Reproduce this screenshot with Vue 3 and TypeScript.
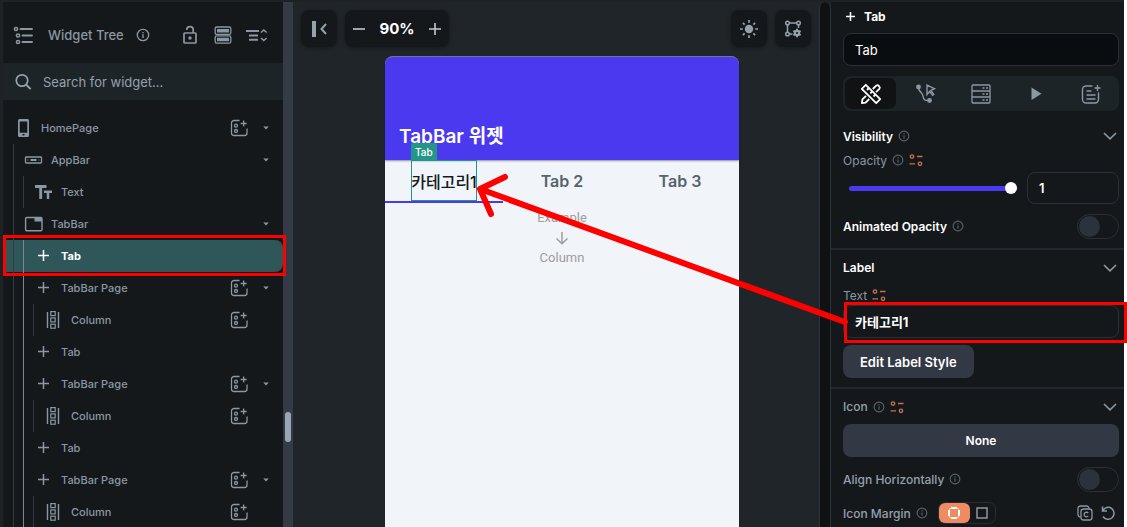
<script setup lang="ts">
import { ref } from 'vue'

interface TreeNode {
  label: string
  icon: string
  depth: number
  add?: boolean
  open?: boolean
  selected?: boolean
  guides: string[]
}

const nodes = ref<TreeNode[]>([
  { label: 'HomePage', icon: 'phone', depth: 0, add: true, open: true, guides: [] },
  { label: 'AppBar', icon: 'appbar', depth: 1, open: true, guides: ['dim'] },
  { label: 'Text', icon: 'text', depth: 2, guides: ['dim', 'dim'] },
  { label: 'TabBar', icon: 'tabbar', depth: 1, open: true, guides: ['dim'] },
  { label: 'Tab', icon: 'plus', depth: 2, selected: true, guides: ['dim', 'lit'] },
  { label: 'TabBar Page', icon: 'plus', depth: 2, add: true, open: true, guides: ['dim', 'lit'] },
  { label: 'Column', icon: 'column', depth: 3, add: true, guides: ['dim', 'lit', 'dim'] },
  { label: 'Tab', icon: 'plus', depth: 2, guides: ['dim', 'lit'] },
  { label: 'TabBar Page', icon: 'plus', depth: 2, add: true, open: true, guides: ['dim', 'lit'] },
  { label: 'Column', icon: 'column', depth: 3, add: true, guides: ['dim', 'lit', 'dim'] },
  { label: 'Tab', icon: 'plus', depth: 2, guides: ['dim', 'lit'] },
  { label: 'TabBar Page', icon: 'plus', depth: 2, add: true, open: true, guides: ['dim', 'lit'] },
  { label: 'Column', icon: 'column', depth: 3, add: true, guides: ['dim', 'lit', 'dim'] },
])

const modes = [
  { id: 'design', label: 'Properties' },
  { id: 'action', label: 'Actions' },
  { id: 'data', label: 'Backend query' },
  { id: 'play', label: 'Animations' },
  { id: 'note', label: 'Documentation' },
]
const mode = ref('design')
const widgetName = ref('Tab')
const labelText = ref('카테고리1')
const opacity = ref('1')
const animated = ref(false)
const alignH = ref(false)
</script>

<template>
  <svg class="sprite" aria-hidden="true">
    <symbol id="info" viewBox="0 0 14 14">
      <circle cx="7" cy="7" r="5.7" fill="none" stroke="currentColor" stroke-width="1.3" />
      <path d="M7 6.3V10M7 3.9v1.3" stroke="currentColor" stroke-width="1.4" />
    </symbol>
    <symbol id="list" viewBox="0 0 20 20">
      <g fill="none" stroke="currentColor" stroke-width="1.5">
        <circle cx="3" cy="4" r="1.6" /><circle cx="5" cy="10.5" r="1.6" /><circle cx="5" cy="17" r="1.6" />
        <path d="M7.5 4H19M9.5 10.5H19M9.5 17H19" stroke-width="1.9" stroke-linecap="round" />
      </g>
    </symbol>
    <symbol id="lock" viewBox="0 0 18 20">
      <g fill="none" stroke="currentColor" stroke-width="1.7">
        <rect x="3" y="8" width="12" height="10" rx="0.8" />
        <path d="M5.8 5V4.800a3.200 3.200 0 0 1 6.400 0V8" />
      </g>
      <circle cx="9" cy="13" r="1.7" fill="currentColor" />
    </symbol>
    <symbol id="rows" viewBox="0 0 18 20">
      <g fill="none" stroke="currentColor" stroke-width="1.3">
        <rect x="1.2" y="2" width="15.6" height="7.4" rx="1.5" />
        <rect x="1.2" y="10.8" width="15.6" height="7.4" rx="1.5" />
      </g>
      <path d="M3 4h12v3.5H3zM3 12.800h12v3.5H3z" fill="currentColor" />
    </symbol>
    <symbol id="sort" viewBox="0 0 22 16">
      <g fill="none" stroke="currentColor" stroke-width="1.9">
        <path d="M0 4h13M3 8.500h9M3 12.700h9" />
        <path d="M15 5.500 17.800 3l2.800 2.500M15 11l2.800 2.500L20.600 11" stroke-width="1.6" />
      </g>
    </symbol>
    <symbol id="search" viewBox="0 0 18 18">
      <circle cx="7" cy="7.5" r="5.7" fill="none" stroke="currentColor" stroke-width="1.7" />
      <path d="m11 11.500 4.700 4.700" stroke="currentColor" stroke-width="1.9" />
    </symbol>
    <symbol id="phone" viewBox="0 0 20 20">
      <path fill="currentColor" fill-rule="evenodd" d="M6.500 1h8q1.500 0 1.500 1.500v15q0 1.500-1.500 1.500h-8Q5 19 5 17.500v-15Q5 1 6.500 1zM6.700 3.500v11.300h7.600V3.500zM9.500 16h2v1.600h-2z" />
    </symbol>
    <symbol id="appbar" viewBox="0 0 20 20">
      <rect x="2.5" y="7" width="16" height="6" rx="0.8" fill="none" stroke="currentColor" stroke-width="1.3" />
      <path d="M7.500 10h6" stroke="currentColor" stroke-width="2" />
      <path d="M4.500 10h1M15.500 10h1" stroke="currentColor" />
    </symbol>
    <symbol id="text" viewBox="0 0 20 20">
      <path d="M2 4.500h11.500M7.700 4v13" fill="none" stroke="currentColor" stroke-width="2.9" />
      <path d="M11 9.700h8M15 9v8" fill="none" stroke="currentColor" stroke-width="2.5" />
    </symbol>
    <symbol id="tabbar" viewBox="0 0 20 20">
      <rect x="2.6" y="3.5" width="16.4" height="13.2" rx="1.2" fill="none" stroke="currentColor" stroke-width="1.4" />
      <path d="M11.500 3.500H19V7.500h-7.500z" fill="currentColor" />
    </symbol>
    <symbol id="plus" viewBox="0 0 20 20">
      <path d="M10.500 4v11M5 9.500h11" stroke="currentColor" stroke-width="1.5" />
    </symbol>
    <symbol id="column" viewBox="0 0 20 20">
      <g fill="none" stroke="currentColor" stroke-width="1.2">
        <path d="M4.500 2v16M15.500 2v16" stroke-width="1.4" />
        <rect x="7.8" y="1.6" width="4.4" height="4" /><rect x="7.8" y="7.9" width="4.4" height="4" /><rect x="7.8" y="14.2" width="4.4" height="4" />
      </g>
    </symbol>
    <symbol id="add" viewBox="0 0 18 18">
      <g fill="none" stroke="currentColor" stroke-width="1.3">
        <path d="M9.500 1.500H4A2.500 2.500 0 0 0 1.500 4v10A2.500 2.500 0 0 0 4 16.500h10.500A2.500 2.500 0 0 0 17 14V9.500" />
        <circle cx="6" cy="6.7" r="1.5" /><circle cx="6" cy="12" r="1.5" />
        <path d="M13.700 1.500v6M10.700 4.500h6" />
      </g>
    </symbol>
    <symbol id="caret" viewBox="0 0 14 14">
      <path d="M4.200 5.500h5.600L7 8.500z" fill="currentColor" />
    </symbol>
    <symbol id="collapse" viewBox="0 0 18 18">
      <path d="M4 1v16" stroke="currentColor" stroke-width="4" />
      <path d="M16 4 11.500 9l4.500 5" fill="none" stroke="currentColor" stroke-width="2" />
    </symbol>
    <symbol id="minus" viewBox="0 0 14 14"><path d="M1 7h12" stroke="currentColor" stroke-width="1.6" /></symbol>
    <symbol id="more" viewBox="0 0 14 14"><path d="M1 7h12M7 1v12" stroke="currentColor" stroke-width="1.6" /></symbol>
    <symbol id="bold-plus" viewBox="0 0 10 10"><path d="M0 5h10M5 0v10" stroke="currentColor" stroke-width="1.7" /></symbol>
    <symbol id="sun" viewBox="0 0 20 20">
      <circle cx="10" cy="10" r="4.2" fill="currentColor" />
      <path d="M10 1v2.800M10 16.200V19M1 10h2.800M16.200 10H19M3.900 3.900l1.700 1.700M14.400 14.400l1.700 1.700M3.900 16.100l1.700-1.700M14.400 5.600l1.700-1.700" stroke="currentColor" stroke-width="1.7" />
    </symbol>
    <symbol id="frame" viewBox="0 0 20 20">
      <g fill="none" stroke="currentColor" stroke-width="1.5">
        <circle cx="4.5" cy="4" r="1.8" /><circle cx="15.5" cy="4" r="1.800" /><circle cx="4.5" cy="15" r="1.8" />
        <path d="M6.500 4h7M4.500 6v7M15.500 6v3M6.500 15h3" />
      </g>
      <circle cx="14" cy="14" r="3.2" fill="currentColor" />
      <path d="M14 9.800v8.400M10.400 11.900l7.200 4.200M10.400 16.100l7.200-4.200" stroke="currentColor" stroke-width="2" />
      <circle cx="14" cy="14" r="1.100" fill="#14181b" />
    </symbol>
    <symbol id="design" viewBox="0 0 22 22">
      <g fill="none" stroke="currentColor" stroke-width="1.8" stroke-linejoin="round">
        <path d="m5.800 1.800 14.400 14.400-4 4L1.800 5.800z" />
        <path d="m7 7 1.800-1.800M10.300 10.300l1.800-1.800M13.500 13.500l1.800-1.800" />
        <path d="m12.800 6 3.400-3.400q1.300-1 2.500.2l.5.500q1.200 1.200.2 2.500L16 9.200M6 12.800 2.400 16.400l-.5 3.700 3.700-.5 3.600-3.600" stroke-width="1.8" />
      </g>
    </symbol>
    <symbol id="action" viewBox="0 0 22 22">
      <circle cx="3.5" cy="4" r="2.4" fill="currentColor" /><circle cx="14.5" cy="17.5" r="2.4" fill="currentColor" />
      <path d="M3.500 5C4.500 10 7.500 9 8 13s2 4.500 5 4.500M12 2l7.500 3.800-3.600 1.600 2.900 4-1.200.9-2.900-4L12 11.500z" fill="none" stroke="currentColor" stroke-width="1.4" />
    </symbol>
    <symbol id="data" viewBox="0 0 22 22">
      <g fill="none" stroke="currentColor" stroke-width="1.3">
        <rect x="2" y="2" width="18" height="18" rx="1" />
        <path d="M2 8h18M2 14h18" />
        <path d="M12.500 5h2M16 5h2M12.500 11h2M16 11h2M12.500 17h2M16 17h2" stroke-width="1.6" />
      </g>
    </symbol>
    <symbol id="play" viewBox="0 0 22 22"><path d="M6.500 4.500v12.500L16.500 10.700z" fill="currentColor" /></symbol>
    <symbol id="note" viewBox="0 0 22 22">
      <g fill="none" stroke="currentColor" stroke-width="1.4" stroke-linecap="round">
        <path d="M12 3H6a3.500 3.500 0 0 0-3.500 3.500v10A3.500 3.500 0 0 0 6 20h9a3.500 3.500 0 0 0 3.500-3.500V10M17.500 2.500v5M15 5h5" />
        <path d="M7 8h4M7 12h8M7 16h8" />
      </g>
    </symbol>
    <symbol id="down" viewBox="0 0 14 14"><path d="m1 4 6 5.800L13 4" fill="none" stroke="currentColor" stroke-width="1.6" /></symbol>
    <symbol id="vars" viewBox="0 0 14 14">
      <g fill="none" stroke="currentColor" stroke-width="1.3">
        <circle cx="3" cy="3.5" r="1.7" /><circle cx="11" cy="10.8" r="1.7" />
        <path d="M8 3.500h5.500M.5 10.800h5.500" />
      </g>
    </symbol>
    <symbol id="corners" viewBox="0 0 14 14">
      <path d="M4 2h6M4 12h6M2 4v6M12 4v6" stroke="#fff" stroke-width="2" />
      <path d="M2.500 4V2.500H4M10 2.500h1.500V4M2.500 10v1.500H4M10 11.500h1.500V10" fill="none" stroke="#f7c9b0" />
    </symbol>
    <symbol id="square" viewBox="0 0 14 14"><rect x="2" y="2" width="10" height="10" fill="none" stroke="currentColor" stroke-width="1.5" /></symbol>
    <symbol id="copy" viewBox="0 0 16 16">
      <g fill="none" stroke="currentColor" stroke-width="1.3">
        <rect x="4" y="4" width="11" height="11" rx="2.5" />
        <path d="M3.500 12A2.500 2.500 0 0 1 1 9.500v-6A2.500 2.500 0 0 1 3.500 1h6A2.500 2.500 0 0 1 12 3.500M11.300 8.200a2.300 2.300 0 1 0 0 2.700" />
      </g>
    </symbol>
    <symbol id="undo" viewBox="0 0 16 16">
      <path d="M2.500 1.500v4.500H7M2.800 5.500a6 6 0 1 1 .2 6" fill="none" stroke="currentColor" stroke-width="1.5" />
    </symbol>
  </svg>

  <div class="app">
    <aside class="tree">
      <header class="tree-head">
        <svg class="i20"><use href="#list" /></svg>
        <h1>Widget Tree</h1>
        <svg class="i14"><use href="#info" /></svg>
        <div class="tree-tools">
          <button aria-label="Unlock"><svg class="i20"><use href="#lock" /></svg></button>
          <button aria-label="Layout"><svg class="i20"><use href="#rows" /></svg></button>
          <button aria-label="Collapse all"><svg class="i22"><use href="#sort" /></svg></button>
        </div>
      </header>
      <label class="search">
        <svg class="i18"><use href="#search" /></svg>
        <input type="text" placeholder="Search for widget..." aria-label="Search for widget" />
      </label>
      <ul class="nodes">
        <li v-for="(n, i) in nodes" :key="i" class="node" :class="{ selected: n.selected }">
          <span v-for="(g, k) in n.guides" :key="k" class="guide" :class="g"></span>
          <svg class="i20"><use :href="'#' + n.icon" /></svg>
          <span class="name">{{ n.label }}</span>
          <button v-if="n.add" aria-label="Add child"><svg class="i18"><use href="#add" /></svg></button>
          <span class="caret">
            <button v-if="n.open" aria-label="Toggle children"><svg class="i14"><use href="#caret" /></svg></button>
          </span>
        </li>
      </ul>
    </aside>

    <div class="track"><span class="thumb"></span></div>

    <main class="canvas">
      <div class="toolbar">
        <button class="tool" aria-label="Collapse panel"><svg class="i18"><use href="#collapse" /></svg></button>
        <div class="tool zoom">
          <button aria-label="Zoom out"><svg class="i14"><use href="#minus" /></svg></button>
          <strong>90%</strong>
          <button aria-label="Zoom in"><svg class="i14"><use href="#more" /></svg></button>
        </div>
        <span class="spacer"></span>
        <button class="tool" aria-label="Light mode"><svg class="i20"><use href="#sun" /></svg></button>
        <button class="tool" aria-label="Canvas settings"><svg class="i20"><use href="#frame" /></svg></button>
      </div>
      <section class="device">
        <div class="appbar">TabBar 위젯</div>
        <div class="tabs">
          <div class="tab current">
            <span class="picked"><span class="tag">Tab</span>카테고리1</span>
          </div>
          <div class="tab">Tab 2</div>
          <div class="tab">Tab 3</div>
        </div>
        <div class="example">
          <span>Example</span>
          <svg class="i14" viewBox="0 0 14 14"><path d="M7 1v11.500M1.500 7.500 7 12.700l5.500-5.200" fill="none" stroke="currentColor" stroke-width="1.5" /></svg>
          <span>Column</span>
        </div>
      </section>
      <span class="rail"></span>
    </main>

    <aside class="props">
      <div class="title"><svg class="tiny"><use href="#bold-plus" /></svg><h2>Tab</h2></div>
      <input v-model="widgetName" class="field dark" type="text" aria-label="Widget name" />
      <nav class="modes">
        <button v-for="m in modes" :key="m.id" :class="{ on: mode === m.id }" :aria-label="m.label" @click="mode = m.id">
          <svg class="i22"><use :href="'#' + m.id" /></svg>
        </button>
      </nav>

      <section class="group first">
        <div class="row"><h3>Visibility</h3><svg class="faint"><use href="#info" /></svg><button class="end" aria-label="Collapse Visibility"><svg class="i14"><use href="#down" /></svg></button></div>
        <div class="row"><label for="opacity">Opacity</label><svg class="faint"><use href="#info" /></svg><svg class="i14 orange"><use href="#vars" /></svg></div>
        <div class="slide">
          <input id="opacity" v-model="opacity" type="range" min="0" max="1" step="0.01" />
          <input v-model="opacity" class="field num" type="text" aria-label="Opacity value" />
        </div>
        <div class="row toggle-row"><label class="strong" for="anim">Animated Opacity</label><svg class="faint"><use href="#info" /></svg><input id="anim" v-model="animated" class="switch end" type="checkbox" /></div>
      </section>

      <section class="group">
        <div class="row tall"><h3>Label</h3><button class="end" aria-label="Collapse Label"><svg class="i14"><use href="#down" /></svg></button></div>
        <div class="row short"><label for="label-text">Text</label><svg class="i14 orange"><use href="#vars" /></svg></div>
        <input id="label-text" v-model="labelText" class="field ko" type="text" />
        <button class="solid edit">Edit Label Style</button>
      </section>

      <section class="group">
        <div class="row tall"><h3 class="soft">Icon</h3><svg class="faint"><use href="#info" /></svg><svg class="i14 orange"><use href="#vars" /></svg><button class="end" aria-label="Collapse Icon"><svg class="i14"><use href="#down" /></svg></button></div>
        <button class="solid none">None</button>
        <div class="row toggle-row"><label class="soft" for="align">Align Horizontally</label><svg class="faint"><use href="#info" /></svg><input id="align" v-model="alignH" class="switch end" type="checkbox" /></div>
        <div class="row">
          <span class="soft">Icon Margin</span><svg class="faint"><use href="#info" /></svg>
          <div class="segment">
            <button class="on" aria-label="Each side"><svg class="i14"><use href="#corners" /></svg></button>
            <button aria-label="All sides"><svg class="i14"><use href="#square" /></svg></button>
          </div>
          <div class="pair end">
            <button aria-label="Copy"><svg class="i16"><use href="#copy" /></svg></button>
            <button aria-label="Reset"><svg class="i16"><use href="#undo" /></svg></button>
          </div>
        </div>
      </section>
    </aside>
  </div>

  <svg class="marks" aria-hidden="true">
    <g fill="none" stroke="#f00">
      <rect x="4.5" y="236.5" width="280" height="38" stroke-width="3" />
      <rect x="845.5" y="303.5" width="280" height="38" stroke-width="3" />
      <path d="M845 322 480 189M505 177l-25 12 11 25" stroke-width="6" stroke-linecap="round" stroke-linejoin="round" />
    </g>
  </svg>
</template>

<style>
html, body { margin: 0; overflow: hidden; background: #fff; }
</style>

<style scoped>
* { box-sizing: border-box; }
.sprite { position: absolute; width: 0; height: 0; }
.app {
  display: grid;
  grid-template-columns: 280px 10px 1fr 293px;
  height: 100vh;
  overflow: hidden;
  border: solid #1d2225;
  border-width: 2px 0 0 3px;
  margin-right: 3px;
  background: #14181b;
  color: #8b97a2;
  font-family: Inter, "Noto Sans CJK KR", sans-serif;
  font-size: 13px;
}
button { display: flex; align-items: center; justify-content: center; padding: 0; border: 0; background: none; color: inherit; font: inherit; }
input { font: inherit; color: inherit; margin: 0; outline: 0; }
h1, h2, h3 { margin: 0; font-size: 13px; font-weight: 600; }
svg { display: block; flex: none; }
.i14 { width: 14px; height: 14px; }
.i16 { width: 16px; height: 16px; }
.i18 { width: 18px; height: 18px; }
.i20 { width: 20px; height: 20px; }
.i22 { width: 22px; height: 22px; }

.tree { min-width: 0; }
.tree-head { display: flex; align-items: center; height: 61px; padding: 4px 15px 0 10px; }
.tree-head h1 { margin: 0 12px 0 15px; font-weight: 500; white-space: nowrap; }
.tree-tools { display: flex; gap: 13px; margin-left: auto; }
.search { display: flex; align-items: center; height: 37px; padding: 0 12px; gap: 10px; background: #1d2428; color: #95a1ac; }
.search input { flex: 1; min-width: 0; padding: 0; border: 0; background: none; }
.search input::placeholder { color: #95a1ac; opacity: 1; }
.nodes { margin: 0; padding: 12px 0 0; list-style: none; font-size: 11px; font-weight: 500; }
.node { display: flex; align-items: center; height: 32px; padding: 0 10px; }
.guide { width: 10px; height: 100%; border-left: 1px solid #343a3f; }
.guide.lit { border-color: #7d8790; }
.name { flex: 1; margin-left: 8px; white-space: nowrap; }
.caret { width: 14px; margin-left: 11px; }
.selected { background: #2f5759; border-radius: 4px 8px 8px 4px; color: #fff; }
.selected .name { font-weight: 700; }

.track { background: #343a46; display: flex; justify-content: center; }
.thumb { width: 6px; height: 30px; margin-top: 410px; border-radius: 3px; background: #9aa5b5; }

.canvas { position: relative; display: flex; flex-direction: column; align-items: center; min-width: 0; background: #202529; }
.toolbar { align-self: stretch; display: flex; gap: 8px; padding: 8px 20px 9px 8px; }
.tool { width: 36px; height: 37px; border-radius: 8px; background: #14181b; box-shadow: 0 1px 4px #0005; color: #95a1ac; }
.zoom { display: flex; align-items: center; justify-content: space-between; width: 104px; padding: 0 7px; color: #c5cad0; }
.zoom strong { color: #fff; font-size: 15px; }
.spacer { flex: 1; }
.device { flex: 1; width: 354px; border-top: 1px solid #77779f; border-radius: 8px 8px 0 0; background: #f1f4f8; color: #57636c; }
.appbar { display: flex; align-items: flex-end; height: 103px; padding: 0 14px 10px; border-radius: 7px 7px 0 0; background: #4b39ef; color: #fff; font-size: 19px; line-height: 26px; font-weight: 600; box-shadow: 0 1px 2px #0006; }
.tabs { display: grid; grid-template-columns: repeat(3, 1fr); font-size: 16px; font-weight: 600; }
.tab { display: flex; align-items: center; justify-content: center; height: 43px; border-bottom: 2px solid transparent; }
.current { border-color: #4b39ef; color: #14181b; font-weight: 500; }
.picked { position: relative; display: flex; align-items: center; justify-content: center; width: 66px; height: 41px; border: 1px solid #249689; white-space: nowrap; }
.tag { position: absolute; left: -1px; bottom: 100%; padding: 0 4px; border-radius: 2px 2px 0 0; background: #249689; color: #fff; font-size: 10px; line-height: 18px; }
.example { display: flex; flex-direction: column; align-items: center; gap: 5px; padding-top: 7px; font: 13px/16px Roboto, sans-serif; color: #9e9e9e; }
.rail { position: absolute; top: 0; bottom: 0; right: 0; width: 12px; border: solid #2b323b; border-width: 0 1px; border-radius: 6px 6px 0 0; background: #0f1113; }

.props { min-width: 0; padding: 0 5px 0 12px; }
.title { display: flex; align-items: center; gap: 9px; height: 29px; margin-bottom: 2px; padding: 0 3px; color: #fff; }
.title h2 { font-size: 12px; font-weight: 700; }
.tiny { width: 9px; height: 9px; }
.field { display: block; width: 100%; height: 33px; padding: 0 11px; border: 1px solid #2a3038; border-radius: 8px; background: none; color: #fff; }
.dark { background: #090d10; }
.ko { font-weight: 700; }
.modes { display: grid; grid-template-columns: repeat(5, 1fr); margin-top: 10px; height: 35px; border-radius: 8px; background: #1d2428; }
.modes button { margin: 2px; border-radius: 7px; }
.modes .on { background: #101213; color: #fff; }
.group { margin: 0 -5px 0 -12px; padding: 0 5px 0 12px; border-top: 2px solid #22282d; }
.first { border-top: 0; margin-top: 13px; }
.row { display: flex; align-items: center; gap: 5px; height: 24px; font-size: 12px; white-space: nowrap; }
.row h3 { font-size: 12px; }
.tall { height: 35px; }
.short { height: 20px; }
.toggle-row { height: 44px; }
.end { margin-left: auto; }
.row button.end { margin-right: 2px; }
h3, .row .strong { color: #fff; font-weight: 600; }
.row .soft { color: #95a1ac; font-weight: 500; }
.faint { width: 12px; height: 12px; color: #57636c; }
.orange { color: #c4704c; }
.slide { display: flex; align-items: center; gap: 10px; padding-left: 6px; }
.slide input[type="range"] { flex: 1; min-width: 0; height: 12px; appearance: none; background: none; }
.slide input[type="range"]::-webkit-slider-runnable-track { height: 5px; border-radius: 3px; background: #4b39ef; }
.slide input[type="range"]::-webkit-slider-thumb { appearance: none; width: 12px; height: 12px; margin-top: -4px; border-radius: 50%; background: #fff; }
.num { width: 92px; height: 32px; font-weight: 600; }
.switch { appearance: none; width: 42px; height: 25px; border: 1px solid #2b3038; border-radius: 13px; }
.switch::before { content: ""; display: block; width: 21px; height: 21px; margin: 1px; border-radius: 50%; background: #2c323b; }
.switch:checked::before { margin-left: 18px; }
.solid { height: 33px; border-radius: 8px; background: #323844; color: #fff; font-weight: 600; }
.edit { margin: 7px 0 9px; padding: 0 17px; }
.none { width: 100%; font-size: 12px; }
.segment { display: flex; height: 22px; margin-left: 5px; border: 1px solid #262c32; border-radius: 7px; }
.segment button { width: 25px; }
.segment .on { width: 31px; height: 20px; border-radius: 6px; background: #ee8b60; }
.pair { display: flex; gap: 7px; margin-right: 3px; }
.marks { position: absolute; left: 0; top: 0; width: 100%; height: 100vh; pointer-events: none; }
</style>
